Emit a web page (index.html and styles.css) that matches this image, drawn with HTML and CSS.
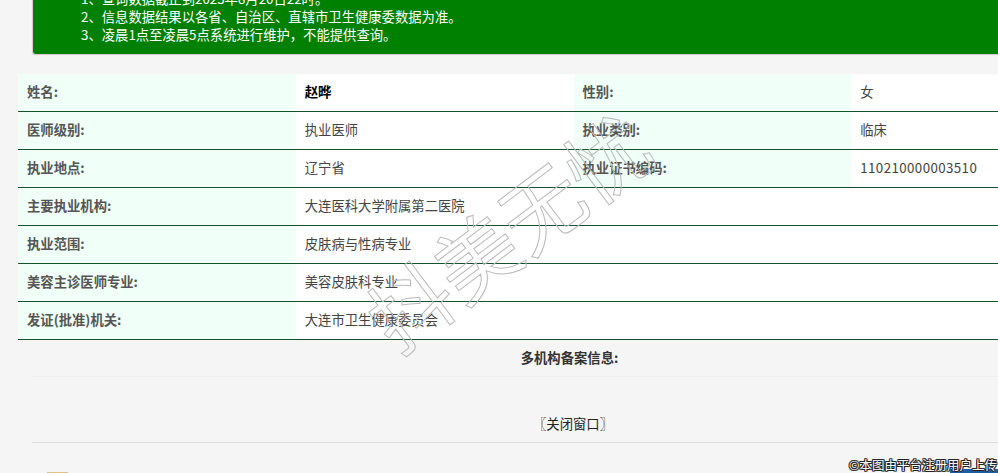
FILE: index.html
```html
<!DOCTYPE html>
<html lang="zh-CN">
<head>
<meta charset="utf-8">
<title>执业信息</title>
<link rel="stylesheet" href="styles.css">
</head>
<body>
<div class="page">
  <div class="notice">
    <p>1、查询数据截止到2023年8月20日22时。</p>
    <p>2、信息数据结果以各省、自治区、直辖市卫生健康委数据为准。</p>
    <p>3、凌晨1点至凌晨5点系统进行维护，不能提供查询。</p>
  </div>
  <table class="info">
    <tr><th>姓名:</th><td class="name">赵晔</td><th>性别:</th><td>女</td></tr>
    <tr><th>医师级别:</th><td>执业医师</td><th>执业类别:</th><td>临床</td></tr>
    <tr><th>执业地点:</th><td>辽宁省</td><th>执业证书编码:</th><td class="code">110210000003510</td></tr>
    <tr><th>主要执业机构:</th><td colspan="3">大连医科大学附属第二医院</td></tr>
    <tr><th>执业范围:</th><td colspan="3">皮肤病与性病专业</td></tr>
    <tr><th>美容主诊医师专业:</th><td colspan="3">美容皮肤科专业</td></tr>
    <tr><th>发证(批准)机关:</th><td colspan="3">大连市卫生健康委员会</td></tr>
  </table>
  <div class="lower">
    <div class="multi">多机构备案信息:</div>
    <div class="close">〖关闭窗口〗</div>
    <div class="thumb"></div>
  </div>
</div>
<div class="stamp">抖美无忧</div>
<div class="credit-bar"></div>
<div class="credit">©本图由平台注册用户上传</div>
</body>
</html>
```
FILE: styles.css
```css
html, body {
  margin: 0;
  height: 473px;
  overflow: hidden;
  background: #f5f5f5;
}
body {
  position: relative;
  font-family: "Noto Sans CJK SC", "Liberation Sans", sans-serif;
  font-size: 13.33px;
  color: #333;
}
.page {
  width: 1129px;
}
.notice {
  margin: -40px 0 20px 33px;
  width: 1082px;
  height: 94px;
  box-sizing: border-box;
  padding: 30px 0 0 48px;
  background: #008000;
  border-radius: 0 0 3px 3px;
  box-shadow: -1px 1px 1px #d8c8c8;
  color: #fff;
}
.notice p {
  margin: 0;
  line-height: 18px;
}
.info {
  margin-left: 18px;
  width: 1111px;
  border-collapse: separate;
  border-spacing: 0;
  table-layout: fixed;
  background: #fff;
}
.info tr {
  height: 38px;
}
.info th, .info td {
  height: 35px;
  box-sizing: content-box;
  padding: 0 0 2px 9px;
  border-bottom: 1px solid #14532d;
  text-align: left;
}
.info th {
  background: #f0fff7;
  color: #555;
  font-weight: bold;
}
.info td {
  color: #444;
}
.info td.name {
  color: #000;
  font-weight: bold;
}
.info td.code {
  letter-spacing: 0.4px;
}
.lower {
  margin-left: 32px;
  width: 1082px;
}
.multi {
  height: 36px;
  line-height: 36px;
  text-indent: -7px;
  text-align: center;
  font-weight: bold;
  color: #333;
  border-bottom: 1px solid #eee;
}
.close {
  margin-top: 29px;
  height: 36px;
  line-height: 36px;
  text-align: center;
  color: #222;
  border-bottom: 1px solid #ddd;
}
.thumb {
  margin: 29px 0 0 15px;
  width: 21px;
  height: 4px;
  background: linear-gradient(90deg, #c8c0b0, #e8c080 25%, #e8c080 75%, #c8c0b0);
}
.stamp {
  position: absolute;
  left: 346px;
  top: 190px;
  width: 300px;
  line-height: 96px;
  text-align: center;
  font-size: 82px;
  white-space: nowrap;
  color: transparent;
  -webkit-text-stroke: 1px #bababa;
  transform: rotate(-37deg);
}
.credit-bar {
  position: absolute;
  right: 0;
  bottom: 0;
  width: 48px;
  height: 4px;
  background: #1c5fa0;
}
.credit {
  position: absolute;
  right: 1px;
  top: 457px;
  font-size: 12.5px;
  line-height: 16px;
  color: #fff;
  white-space: nowrap;
  text-shadow: 1px 0 0 #222, -1px 0 0 #222, 0 1px 0 #222, 0 -1px 0 #222, 1px 1px 0 #444, -1px -1px 0 #444, 1px -1px 0 #444, -1px 1px 0 #444;
}
```
